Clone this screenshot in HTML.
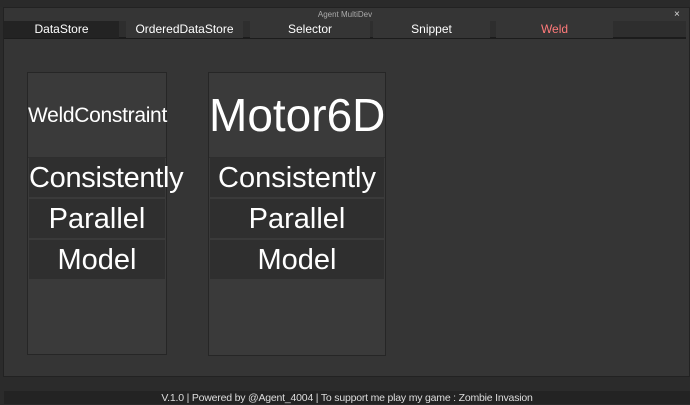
<!DOCTYPE html><html><head><style>
body{margin:0;width:690px;height:404px;background:#2b2b2b;font-family:"Liberation Sans",sans-serif;position:relative;overflow:hidden}
div{position:absolute;box-sizing:border-box}
.tab{top:21px;height:17px;color:#fff;font-size:12px;text-align:center;line-height:17px;background:#353535}
.card{background:#3a3a3a;border:1px solid #262626}
.row{left:1px;right:1px;background:#2f2f2f;color:#fff;text-align:center;border-bottom:2px solid #3a3a3a;white-space:nowrap}
</style></head><body>
<div style="left:0;top:0;width:690px;height:7px;background:#2a2a2a"></div>
<div style="left:3px;top:7px;width:687px;height:370px;background:#353535;border:1px solid #222"></div>
<div style="left:4px;top:8px;width:682px;height:13px;color:#aaa;font-size:8px;text-align:center;line-height:13px">Agent MultiDev</div>
<div style="left:674px;top:8px;color:#ddd;font-size:10px;line-height:13px">×</div>
<div style="left:4px;top:21px;width:682px;height:18px;background:#2e2e2e;border-bottom:2px solid #1c1c1c"></div>
<div class="tab" style="left:4px;width:115px;background:#232323">DataStore</div>
<div class="tab" style="left:126px;width:117px;background:#353535">OrderedDataStore</div>
<div class="tab" style="left:250px;width:120px;background:#353535">Selector</div>
<div class="tab" style="left:373px;width:117px;background:#353535">Snippet</div>
<div class="tab" style="left:496px;width:117px;background:#353535;color:#ff7a7a">Weld</div>
<div class="card" style="left:27px;top:72px;width:140px;height:283px">
<div style="left:0;top:0;width:138px;height:85px;color:#fff;font-size:21px;text-align:center;line-height:85px;border-bottom:1px solid #2e2e2e;white-space:nowrap;letter-spacing:-0.3px">WeldConstraint</div>
<div class="row" style="top:85px;height:41px;font-size:29px;line-height:41px;letter-spacing:-0.3px">Consistently</div>
<div class="row" style="top:126px;height:41px;font-size:29px;line-height:41px">Parallel</div>
<div class="row" style="top:167px;height:41px;font-size:29px;line-height:41px">Model</div>
</div>
<div class="card" style="left:208px;top:72px;width:178px;height:284px">
<div style="left:0;top:0;width:176px;height:85px;color:#fff;font-size:46px;text-align:center;line-height:85px;border-bottom:1px solid #2e2e2e;white-space:nowrap">Motor6D</div>
<div class="row" style="top:85px;height:41px;font-size:29px;line-height:41px">Consistently</div>
<div class="row" style="top:126px;height:41px;font-size:29px;line-height:41px">Parallel</div>
<div class="row" style="top:167px;height:41px;font-size:29px;line-height:41px">Model</div>
</div>
<div style="left:4px;top:391px;width:686px;height:13px;background:#232323;color:#ddd;font-size:10.5px;text-align:center;line-height:14px;letter-spacing:-0.2px">V.1.0 | Powered by @Agent_4004 | To support me play my game : Zombie Invasion</div>
</body></html>
